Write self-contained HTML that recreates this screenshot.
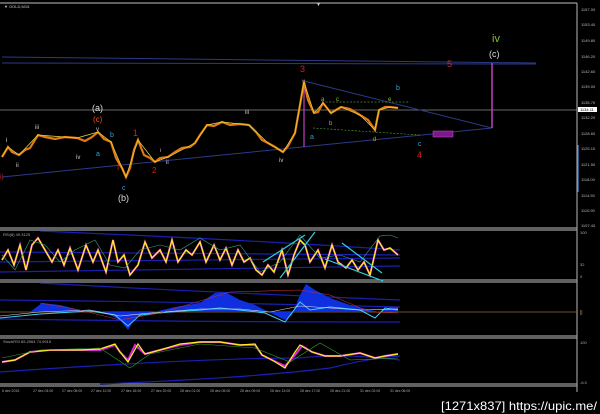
<!DOCTYPE html>
<html><head><style>
html,body{margin:0;padding:0;background:#000;width:600px;height:414px;overflow:hidden}
svg{display:block}
text{font-family:"Liberation Sans",sans-serif}
</style></head><body>
<svg width="600" height="414" viewBox="0 0 600 414" xmlns="http://www.w3.org/2000/svg">
<rect width="600" height="414" fill="#000"/>
<g stroke="#9a9a9a" stroke-width="1.2" fill="none">
<line x1="0" y1="3" x2="577" y2="3"/>
<line x1="577" y1="3" x2="577" y2="392"/>
<line x1="0" y1="228" x2="577" y2="228"/>
<line x1="0" y1="230" x2="577" y2="230"/>
<line x1="0" y1="280" x2="577" y2="280"/>
<line x1="0" y1="282" x2="577" y2="282"/>
<line x1="0" y1="336" x2="577" y2="336"/>
<line x1="0" y1="338" x2="577" y2="338"/>
<line x1="0" y1="384" x2="577" y2="384"/>
<line x1="0" y1="386" x2="577" y2="386"/>
</g>
<text x="4" y="8" fill="#ccc" font-size="4">▼ GOLD,M15</text>
<text x="316" y="6" fill="#ccc" font-size="5">▼</text>
<g fill="#bbb" font-size="4">
<text x="581" y="11">1157.00</text><text x="581" y="26">1153.40</text><text x="581" y="42">1149.80</text>
<text x="581" y="58">1146.20</text><text x="581" y="73">1142.60</text><text x="581" y="88">1139.00</text>
<text x="581" y="104">1135.70</text><text x="581" y="119">1132.20</text><text x="581" y="135">1128.60</text>
<text x="581" y="150">1125.10</text><text x="581" y="166">1121.50</text><text x="581" y="181">1118.00</text>
<text x="581" y="197">1114.50</text><text x="581" y="212">1110.90</text><text x="581" y="227">1107.40</text>
</g>
<rect x="578" y="107" width="19" height="5" fill="#fff"/>
<text x="580" y="111" font-size="4" fill="#000">1134.11</text>
<line x1="578" y1="145" x2="578" y2="192" stroke="#4aa3ff" stroke-width="1"/>
<line x1="0" y1="110" x2="577" y2="110" stroke="#8a8a8a" stroke-width="0.8"/>
<g stroke="#2a3a8a" stroke-width="1" fill="none">
<line x1="2" y1="57" x2="536" y2="63"/>
<line x1="2" y1="63" x2="536" y2="64"/>
<line x1="2" y1="177" x2="492" y2="128"/>
<line x1="304" y1="81" x2="492" y2="128"/>
</g>
<line x1="304" y1="80" x2="304" y2="147" stroke="#c040c0" stroke-width="1.2"/>
<line x1="492" y1="63" x2="492" y2="128" stroke="#c040c0" stroke-width="1.5"/>
<g stroke="#4a8a3a" stroke-width="0.7" stroke-dasharray="2,1.5" fill="none">
<line x1="322" y1="102" x2="410" y2="102"/>
<line x1="313" y1="128" x2="420" y2="135"/>
</g>
<rect x="433" y="131" width="20" height="6" fill="#7a1a8a" stroke="#c040c0" stroke-width="0.6"/>
<polyline fill="none" stroke="#2030a0" stroke-width="0.8" points="2,157 8,147 19,155 38,135 77,138 98,132 111,142 126,177 138,140 155,162 168,157 195,143 207,125 222,122 249,125 268,143 283,152 295,133 304,82 314,113 323,103 331,113 341,107 360,115 375,130 379,110 390,107 398,108"/>
<polyline fill="none" stroke="#e07a10" stroke-width="2.2" points="2,157 5,152 8,147 12,152 19,155 25,150 30,148 38,135 45,137 55,139 65,137 77,138 85,141 92,137 98,132 104,139 111,142 116,158 122,168 126,177 130,168 134,150 138,140 144,155 150,158 155,162 160,158 168,157 175,152 182,148 190,147 195,143 200,135 207,125 214,126 222,122 230,125 240,124 249,125 256,132 262,140 268,143 275,147 283,152 288,146 295,133 300,105 304,82 308,100 314,113 318,112 323,103 327,108 331,113 336,110 341,107 350,109 360,115 368,120 375,130 379,110 385,107 390,107 398,108"/>
<polyline fill="none" stroke="#f0d030" stroke-width="0.7" points="2,157 8,147 19,155 38,135 77,138 98,132 111,142 126,177 138,140 155,162 168,157 195,143 207,125 222,122 249,125 268,143 283,152 295,133 304,82 314,113 323,103 331,113 341,107 360,115 375,130 379,110 390,107 398,108"/>
<g font-family="Liberation Serif,serif" font-size="8">
<text x="492" y="42" fill="#8abf30" font-size="11">iv</text>
<text x="489" y="57" fill="#ddd" font-size="9">(c)</text>
<text x="447" y="67" fill="#c03030" font-size="9">5</text>
<text x="300" y="72" fill="#d02020" font-size="9">3</text>
<text x="302" y="83" fill="#aaa" font-size="6">v</text>
<text x="396" y="90" fill="#3aa0d0" font-size="7">b</text>
<text x="321" y="101" fill="#8abf30" font-size="6">a</text>
<text x="336" y="101" fill="#8abf30" font-size="6">c</text>
<text x="388" y="101" fill="#8abf30" font-size="6">e</text>
<text x="329" y="125" fill="#8abf30" font-size="6">b</text>
<text x="373" y="141" fill="#8abf30" font-size="6">d</text>
<text x="310" y="139" fill="#3aa0d0" font-size="7">a</text>
<text x="418" y="146" fill="#3aa0d0" font-size="7">c</text>
<text x="417" y="158" fill="#d02020" font-size="9">4</text>
<text x="92" y="111" fill="#ddd" font-size="9">(a)</text>
<text x="93" y="122" fill="#e05020" font-size="8">(c)</text>
<text x="96" y="131" fill="#ccc" font-size="6">v</text>
<text x="110" y="137" fill="#3aa0d0" font-size="7">b</text>
<text x="96" y="156" fill="#3aa0d0" font-size="7">a</text>
<text x="117" y="170" fill="#d02020" font-size="8">I</text>
<text x="133" y="136" fill="#d02020" font-size="9">1</text>
<text x="152" y="173" fill="#d02020" font-size="8">2</text>
<text x="122" y="190" fill="#3aa0d0" font-size="7">c</text>
<text x="118" y="201" fill="#ddd" font-size="9">(b)</text>
<text x="0" y="179" fill="#d02020" font-size="7">i)</text>
<text x="6" y="142" fill="#ddd" font-size="6">i</text>
<text x="16" y="167" fill="#ccc" font-size="6">ii</text>
<text x="35" y="129" fill="#ccc" font-size="6">iii</text>
<text x="76" y="159" fill="#ccc" font-size="6">iv</text>
<text x="160" y="152" fill="#ccc" font-size="5">i</text>
<text x="166" y="164" fill="#ccc" font-size="6">ii</text>
<text x="245" y="114" fill="#ccc" font-size="6">iii</text>
<text x="279" y="162" fill="#ccc" font-size="6">iv</text>
</g>
<g fill="none">
<path d="M40,231 Q250,240 400,250" stroke="#1a20b0" stroke-width="1.2"/>
<path d="M0,252 L400,255" stroke="#1a20b0" stroke-width="1.2"/>
<path d="M0,262 L400,258" stroke="#1a20b0" stroke-width="1.2"/>
<path d="M0,272 L400,266" stroke="#1a20b0" stroke-width="1.2"/>
<polyline stroke="#e020e0" stroke-width="2" points="2,260 8,250 14,265 20,245 26,270 32,245 38,238 45,250 52,262 58,250 64,265 70,248 78,270 86,245 93,262 98,250 106,272 113,240 118,262 124,255 130,275 138,265 145,242 152,258 160,250 166,262 172,240 178,262 186,250 192,255 200,242 206,262 214,245 220,260 226,248 232,265 238,250 244,262 250,258 256,270 262,275 268,265 274,272 282,250 288,275 294,255 300,240 305,245 310,262 318,250 325,268 332,245 338,262 346,268 352,260 358,270 364,262 370,275 378,240 384,250 390,248 398,255"/>
<polyline stroke="#f8f020" stroke-width="1.3" points="2,260 8,250 14,265 20,245 26,270 32,245 38,238 45,250 52,262 58,250 64,265 70,248 78,270 86,245 93,262 98,250 106,272 113,240 118,262 124,255 130,275 138,265 145,242 152,258 160,250 166,262 172,240 178,262 186,250 192,255 200,242 206,262 214,245 220,260 226,248 232,265 238,250 244,262 250,258 256,270 262,275 268,265 274,272 282,250 288,275 294,255 300,240 305,245 310,262 318,250 325,268 332,245 338,262 346,268 352,260 358,270 364,262 370,275 378,240 384,250 390,248 398,255"/>
<polyline stroke="#3aa080" stroke-width="0.6" points="2,255 15,270 30,240 45,245 60,262 75,250 95,240 110,265 125,268 140,250 160,245 180,250 200,238 220,250 240,245 260,272 280,262 300,235 320,258 340,255 360,262 380,236 390,235 398,238"/>
<g stroke="#30d0e0" stroke-width="1.2">
<line x1="263" y1="262" x2="305" y2="235"/>
<line x1="280" y1="278" x2="315" y2="232"/>
<line x1="325" y1="259" x2="383" y2="281"/>
<line x1="342" y1="243" x2="382" y2="273"/>
</g>
</g>
<g fill="#aaa" font-size="4"><text x="3" y="236">RSI(8) 49.3125</text><text x="580" y="234">100</text><text x="580" y="266">32</text><text x="580" y="278">0</text></g>
<line x1="0" y1="312" x2="577" y2="312" stroke="#8a6a3a" stroke-width="0.8"/>
<text x="580" y="314" font-size="5" fill="#c0a060">||</text>
<g fill="none">
<path d="M40,283 Q200,292 400,300" stroke="#1a20b0" stroke-width="1.2"/>
<path d="M0,300 Q200,302 400,307" stroke="#1a20b0" stroke-width="1.2"/>
<path d="M0,319 Q200,322 400,322" stroke="#1a20b0" stroke-width="1.2"/>
</g>
<path d="M0,312 L30,312 L42,303 L60,305 L80,310 L100,311 L110,315 L120,320 L128,330 L135,318 L150,313 L175,307 L200,303 L215,293 L225,292 L240,300 L255,305 L265,310 L275,315 L285,320 L292,315 L300,295 L306,284 L315,290 L330,298 L350,305 L370,310 L380,312 L390,307 L398,307 L398,312 Z" fill="#1030e0"/>
<polyline fill="none" stroke="#40d0f0" stroke-width="1" points="0,318 40,314 90,311 115,315 128,326 140,315 170,312 200,310 220,308 240,310 265,313 285,322 300,302 310,310 330,307 360,310 375,318 385,308 398,310"/>
<polyline fill="none" stroke="#ddd" stroke-width="0.6" points="0,316 40,312 90,310 120,316 150,313 200,309 240,309 270,312 300,306 330,308 360,310 398,309"/>
<polyline fill="none" stroke="#c03030" stroke-width="0.6" points="40,303 80,310 120,320 160,313 230,292 300,290 330,295 370,312 398,313"/>
<g fill="none">
<path d="M0,372 Q200,358 300,358 Q340,353 400,360" stroke="#1a20b0" stroke-width="1.2"/>
<path d="M100,384 Q250,378 330,368 Q370,358 400,356" stroke="#1a20b0" stroke-width="1.2"/>
</g>
<polyline fill="none" stroke="#e020e0" stroke-width="2" points="2,362 15,360 30,352 50,350 80,350 100,350 115,345 120,352 128,360 135,345 145,354 160,350 180,345 200,342 220,342 240,345 255,345 262,355 272,360 285,366 295,355 302,346 312,352 325,356 340,356 360,353 375,358 385,356 398,354"/>
<polyline fill="none" stroke="#f8f020" stroke-width="1.2" points="2,362 15,360 30,352 50,350 80,350 100,349 115,344 120,352 128,362 138,344 145,354 160,350 180,344 200,342 220,342 240,345 255,344 262,355 272,360 285,368 295,352 300,345 312,352 325,356 340,356 360,353 375,358 385,356 398,354"/>
<polyline fill="none" stroke="#30a030" stroke-width="0.6" points="2,358 40,350 100,348 130,368 150,354 200,344 255,348 290,362 320,343 350,360 398,358"/>
<g fill="#aaa" font-size="4"><text x="3" y="343">StochRSI 65.2964 74.9915</text><text x="580" y="344">100</text><text x="580" y="384">-6.0</text></g>
<g fill="#aaa" font-size="3.5">
<text x="2" y="392">6 dec 2015</text><text x="33" y="392">27 dec 04:00</text><text x="62" y="392">27 dec 08:00</text><text x="91" y="392">27 dec 12:00</text>
<text x="121" y="392">27 dec 16:00</text><text x="151" y="392">27 dec 20:00</text><text x="180" y="392">28 dec 01:00</text><text x="210" y="392">28 dec 05:00</text>
<text x="240" y="392">28 dec 09:00</text><text x="270" y="392">28 dec 13:00</text><text x="300" y="392">28 dec 17:00</text><text x="330" y="392">28 dec 21:00</text>
<text x="360" y="392">31 dec 02:00</text><text x="390" y="392">31 dec 06:00</text>
</g>
<text x="441" y="410" fill="#fff" font-size="12" textLength="156" lengthAdjust="spacingAndGlyphs">[1271x837] https://upic.me/</text>
</svg>
</body></html>
